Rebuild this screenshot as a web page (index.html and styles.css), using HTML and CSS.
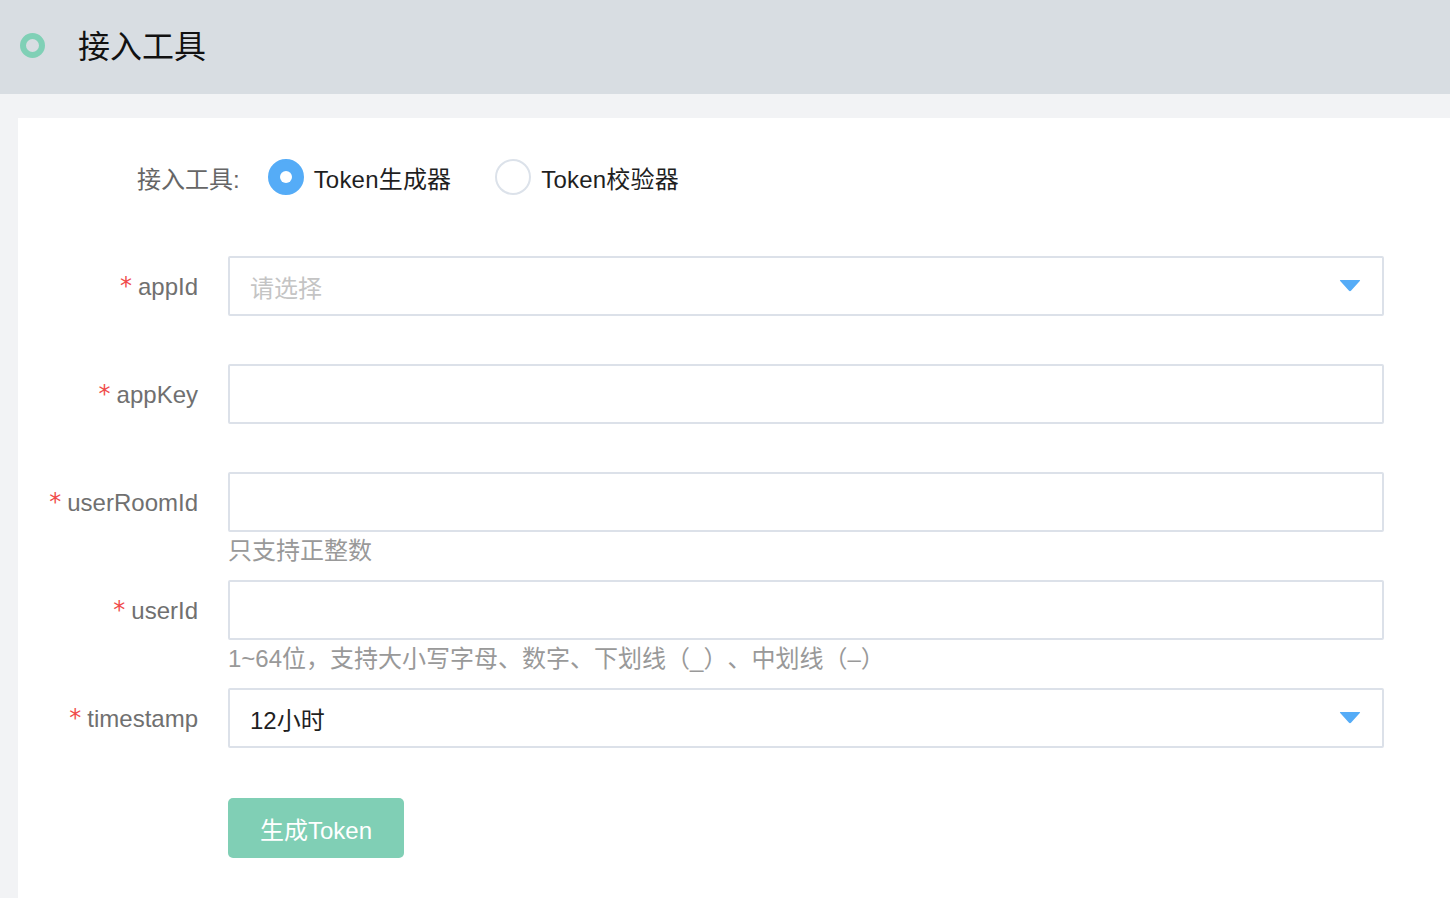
FILE: index.html
```html
<!DOCTYPE html>
<html lang="zh-CN">
<head>
<meta charset="utf-8">
<title>接入工具</title>
<link rel="stylesheet" href="styles.css">
</head>
<body>
<header class="topbar">
  <span class="ring"></span>
  <h1 class="title">接入工具</h1>
</header>
<main class="card">
  <div class="tool-row">
    <span class="tool-label">接入工具:</span>
    <label class="radio checked"><span class="radio-dot"></span><span class="radio-text">Token生成器</span></label>
    <label class="radio"><span class="radio-dot"></span><span class="radio-text">Token校验器</span></label>
  </div>
  <form class="form">
    <div class="field">
      <div class="label"><span class="req">*</span>appId</div>
      <div class="control">
        <div class="select"><span class="placeholder">请选择</span>
          <svg class="arrow" width="22" height="13" viewBox="0 0 22 13"><path d="M1.5 1 H20.5 Q21.6 1 20.8 1.9 L12.2 11.6 Q11 12.8 9.8 11.6 L1.2 1.9 Q0.4 1 1.5 1 Z" fill="#55acf7"/></svg>
        </div>
      </div>
    </div>
    <div class="field">
      <div class="label"><span class="req">*</span>appKey</div>
      <div class="control"><input class="input" type="text"></div>
    </div>
    <div class="field">
      <div class="label"><span class="req">*</span>userRoomId</div>
      <div class="control"><input class="input" type="text"><div class="help">只支持正整数</div></div>
    </div>
    <div class="field">
      <div class="label"><span class="req">*</span>userId</div>
      <div class="control"><input class="input" type="text"><div class="help">1~64位，支持大小写字母、数字、下划线（_）、中划线（–）</div></div>
    </div>
    <div class="field">
      <div class="label"><span class="req">*</span>timestamp</div>
      <div class="control">
        <div class="select"><span class="value">12小时</span>
          <svg class="arrow" width="22" height="13" viewBox="0 0 22 13"><path d="M1.5 1 H20.5 Q21.6 1 20.8 1.9 L12.2 11.6 Q11 12.8 9.8 11.6 L1.2 1.9 Q0.4 1 1.5 1 Z" fill="#55acf7"/></svg>
        </div>
      </div>
    </div>
    <div class="actions">
      <button class="btn" type="button">生成Token</button>
    </div>
  </form>
</main>
</body>
</html>
```
FILE: styles.css
```css
* { box-sizing: border-box; }
html, body { margin: 0; padding: 0; }
body {
  background: #f2f3f5;
  font-family: "Liberation Sans", "Noto Sans CJK SC", sans-serif;
  font-size: 24px;
  color: #1f1f1f;
  overflow: hidden;
  text-spacing-trim: space-all;
}
.topbar {
  height: 94px;
  background: #d8dde2;
  display: flex;
  align-items: center;
  padding-left: 20px;
  padding-bottom: 6px;
  margin-bottom: 24px;
}
.ring {
  width: 25px;
  height: 25px;
  border: 6px solid #80d0b6;
  border-radius: 50%;
  margin-top: 2px;
}
.title {
  margin: 0 0 0 33px;
  font-size: 32px;
  font-weight: normal;
  color: #111;
  font-family: "Noto Sans CJK SC", sans-serif;
  line-height: 40px;
}
.card {
  margin-left: 18px;
  background: #fff;
  padding: 39px 66px 0 0;
  min-height: 800px;
}
.tool-row {
  display: flex;
  align-items: center;
  height: 40px;
  padding-left: 119px;
}
.tool-label {
  color: #666;
  margin-right: 28px;
}
.radio {
  display: flex;
  align-items: center;
  margin-right: 44px;
  color: #1f1f1f;
}
.radio-dot {
  width: 36px;
  height: 36px;
  border-radius: 50%;
  border: 2px solid #dce2ea;
  background: #fff;
  margin-right: 10px;
  display: flex;
  align-items: center;
  justify-content: center;
}
.radio.checked .radio-dot {
  border-color: #55acf7;
  background: #55acf7;
}
.radio.checked .radio-dot::after {
  content: "";
  width: 12px;
  height: 12px;
  border-radius: 50%;
  background: #fff;
}
.radio-text { letter-spacing: 0.2px; }
.form {
  margin: 59px 0 0 0;
}
.field {
  display: flex;
  height: 108px;
}
.label {
  width: 210px;
  padding-right: 30px;
  text-align: right;
  height: 60px;
  line-height: 60px;
  color: #707070;
  white-space: nowrap;
}
.req {
  color: #f04b4b;
  margin-right: 6px;
  font-family: "DejaVu Sans", sans-serif;
  font-size: 24px;
  vertical-align: 1px;
}
.control {
  flex: 1;
}
.input, .select {
  display: block;
  width: 100%;
  height: 60px;
  border: 2px solid #dce1e9;
  border-radius: 2px;
  background: #fff;
  font: inherit;
  outline: none;
  padding: 0 20px;
}
.select {
  display: flex;
  align-items: center;
  justify-content: space-between;
  padding-right: 21px;
}
.placeholder { color: #c4c4c4; font-family: "Noto Sans CJK SC", sans-serif; }
.value { color: #1f1f1f; }
.arrow { display: block; margin-top: -2px; }
.help {
  line-height: 38px;
  color: #999;
  white-space: nowrap;
}
.actions {
  padding-left: 210px;
  padding-top: 2px;
}
.btn {
  width: 176px;
  height: 60px;
  border: none;
  border-radius: 5px;
  background: #80cfb5;
  color: #fff;
  font: inherit;
  padding: 0;
}
```
